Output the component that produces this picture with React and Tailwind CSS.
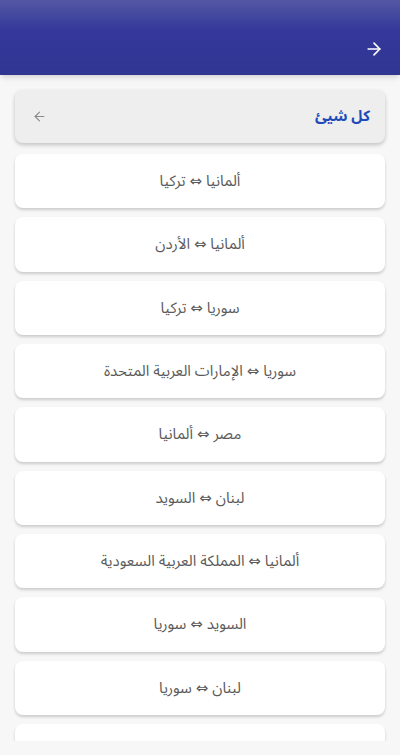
import { ArrowRight, ArrowLeft } from 'lucide-react'

const routes = [
    'ألمانيا ⇔ تركيا',
    'ألمانيا ⇔ الأردن',
    'سوريا ⇔ تركيا',
    'سوريا ⇔ الإمارات العربية المتحدة',
    'مصر ⇔ ألمانيا',
    'لبنان ⇔ السويد',
    'ألمانيا ⇔ المملكة العربية السعودية',
    'السويد ⇔ سوريا',
    'لبنان ⇔ سوريا',
    'ألمانيا ⇔ لبنان',
]

const App = () => {
    return (
        <div
            dir="rtl"
            className="h-[755px] w-[400px] overflow-hidden bg-[#f7f7f7] flex flex-col"
            style={{ fontFamily: '"Noto Sans Arabic", "DejaVu Sans", sans-serif' }}
        >
            <header className="h-[75px] shrink-0 bg-gradient-to-b from-[#5457a3] via-[#35389a] via-40% to-[#303592] shadow-md flex items-end pb-[16px] px-[16px]">
                <ArrowRight className="w-[20px] h-[20px] text-white" strokeWidth={2} />
            </header>

            <div className="h-[666px] overflow-hidden px-[15px] pt-[15px]">
                <div className="h-[53px] rounded-lg bg-[#eeeeee] shadow-[0_2px_4px_rgba(0,0,0,0.22)] flex items-center justify-between pr-[15px] pl-[17px] mb-[11px]">
                    <span className="text-[15px] font-bold text-[#1e4bb8]">كل شيئ</span>
                    <ArrowLeft className="w-[15px] h-[15px] text-[#8a8a8a]" strokeWidth={1.75} />
                </div>

                <div className="flex flex-col gap-[9px]">
                    {routes.map((r, i) => (
                        <div
                            key={i}
                            className="h-[54.33px] shrink-0 rounded-lg bg-white shadow-[0_2px_3px_rgba(0,0,0,0.18)] flex items-center justify-center text-[15px] text-[#5a5a5a]"
                        >
                            {r}
                        </div>
                    ))}
                </div>
            </div>
        </div>
    )
}

export default App
